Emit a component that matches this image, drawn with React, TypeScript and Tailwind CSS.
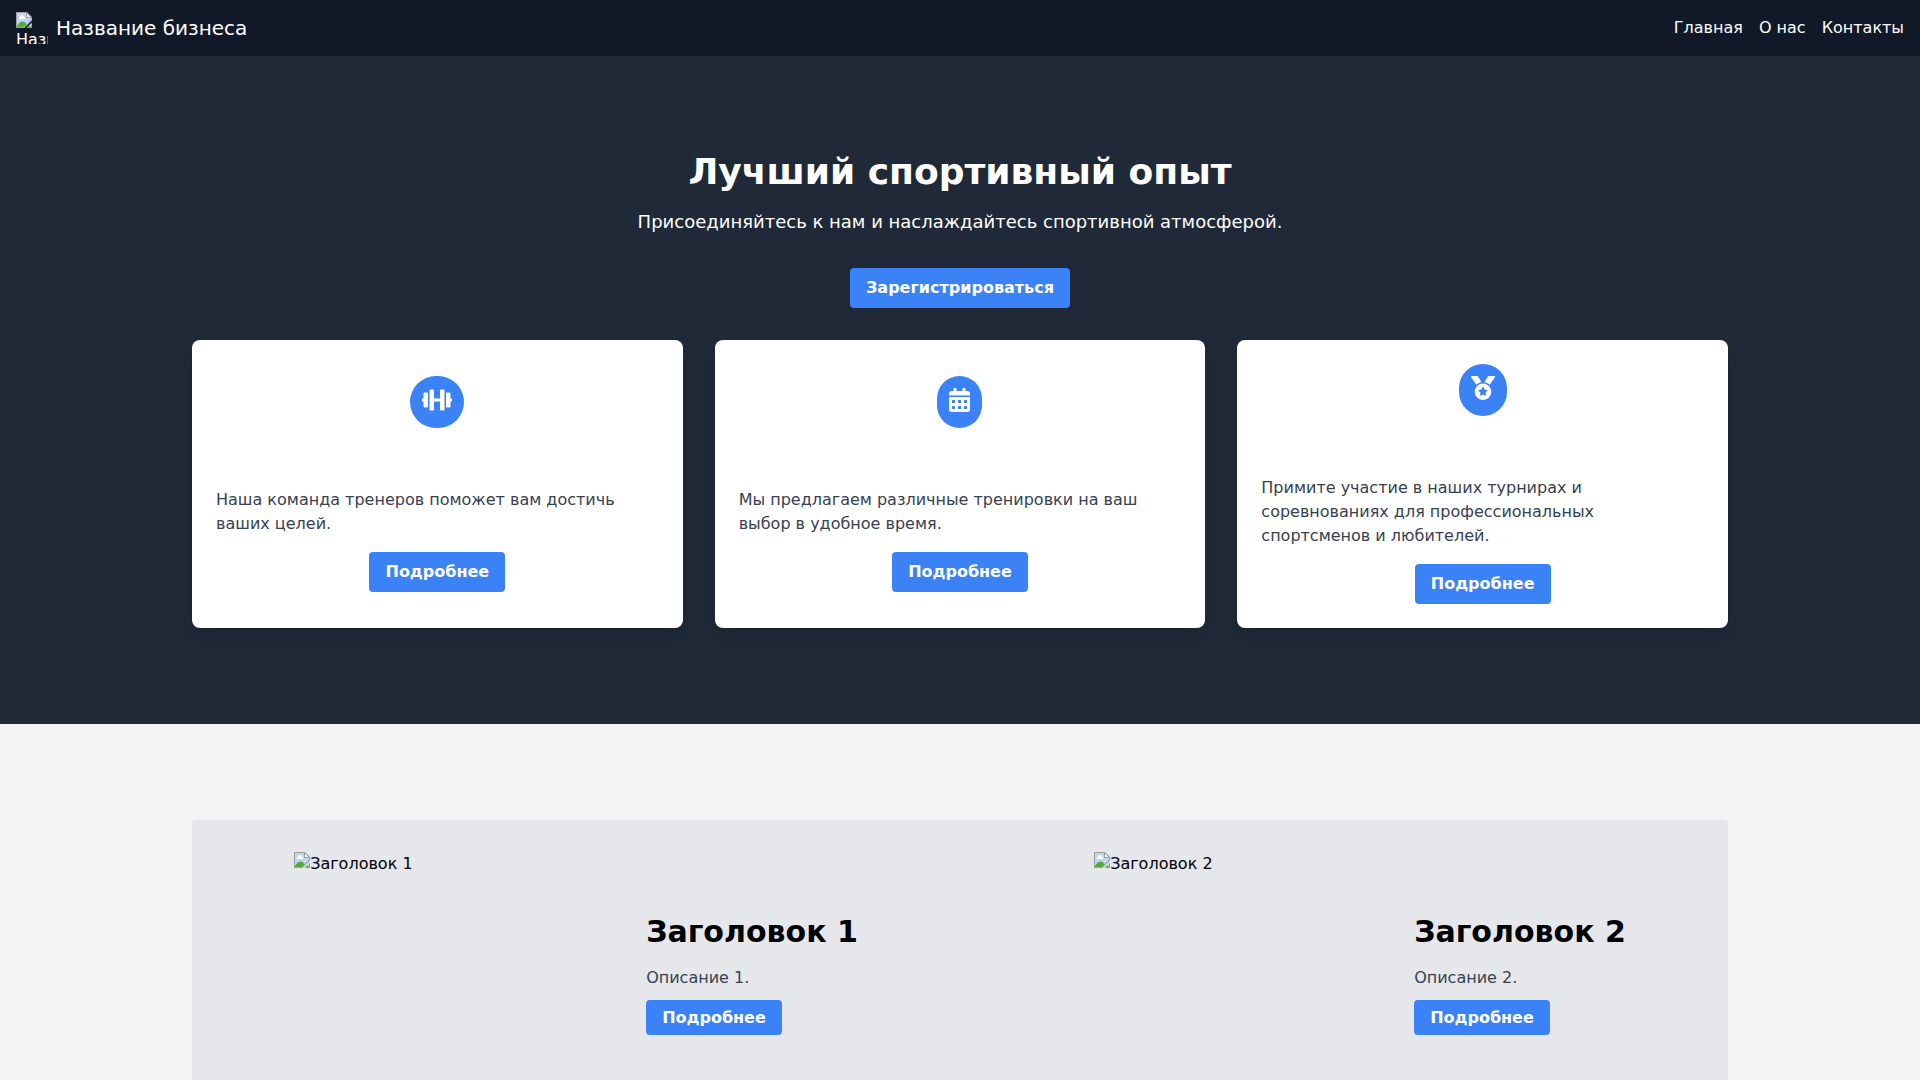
import React, { ReactNode } from 'react';
import { FaCalendarAlt, FaDumbbell, FaMedal } from 'react-icons/fa';

const navLinks = ['Главная', 'О нас', 'Контакты'];

const features = [
  { icon: <FaDumbbell className="h-6 w-[30px]" />, text: 'Наша команда тренеров поможет вам достичь ваших целей.' },
  { icon: <FaCalendarAlt className="h-6 w-[21px]" />, text: 'Мы предлагаем различные тренировки на ваш выбор в удобное время.' },
  {
    icon: <FaMedal className="h-6 w-6" />,
    text: 'Примите участие в наших турнирах и соревнованиях для профессиональных спортсменов и любителей.',
  },
];

function MissingImage() {
  return (
    <svg viewBox="0 0 16 16" className="block h-4 w-4 shrink-0" aria-hidden="true">
      {/* page with a folded corner, torn along the diagonal */}
      <path d="M0 0H11L16 5V8.500L8.500 16H0Z" fill="#9e9e9e" />
      <path d="M1 1H10V6H15V8L8 15H1Z" fill="#c2d5fb" />
      <path d="M11 1.500L14.500 5H11Z" fill="#fff" />
      <path d="M3 7V5H4V4H5V3H7V4H8V5H9V7Z" fill="#fff" />
      <path d="M1 15V14C2.500 11.500 4.500 9.500 6.500 9.500C8.300 9.500 9.600 10.500 10.600 12.400L8 15Z" fill="#56ab35" />
      <path d="M16 10.500V16H10.500Z" fill="#9e9e9e" />
      <path d="M15 11.500V15H11.500Z" fill="#c2d5fb" />
      <path d="M13 13.500L15 14.500V15H11.500Z" fill="#56ab35" />
    </svg>
  );
}

interface FeatureCardProps {
  icon: ReactNode;
  text: string;
}

function FeatureCard({ icon, text }: FeatureCardProps) {
  return (
    <div className="bg-white rounded-lg shadow-lg p-6 flex flex-col items-center justify-center">
      <div className="bg-[#3b82f6] text-white rounded-full px-3 pt-3 pb-4 mb-15">{icon}</div>
      <p className="w-full text-[#374151] mb-4">{text}</p>
      <button className="bg-[#3b82f6] text-white font-bold py-2 px-4 rounded">Подробнее</button>
    </div>
  );
}

interface SlideProps {
  title: string;
  description: string;
  spaced?: boolean;
}

function Slide({ title, description, spaced }: SlideProps) {
  return (
    <article className={spaced ? 'flex items-center mr-8' : 'flex items-center'}>
      <div className={spaced ? 'flex h-60 w-80 mr-8' : 'flex h-60 w-80'}>
        <MissingImage />
        <span>{title}</span>
      </div>
      <div>
        <h2 className="text-3xl font-bold mb-4">{title}</h2>
        <p className="text-[#374151] mb-4">{description}</p>
        <a href="#" className="bg-[#3b82f6] text-white font-bold py-2 px-4 rounded">
          Подробнее
        </a>
      </div>
    </article>
  );
}

export default function App() {
  return (
    <div className="min-h-screen bg-[#f3f4f6] text-black font-['DejaVu_Sans',sans-serif]">
      <nav className="bg-[#111827] text-white px-4 py-3 flex items-center justify-between">
        <a href="#" className="flex items-center">
          <div className="h-8 w-8 mr-2 overflow-hidden">
            <MissingImage />
            <span className="block">Название</span>
          </div>
          <span className="text-xl">Название бизнеса</span>
        </a>
        <ul className="flex gap-4">
          {navLinks.map((link) => (
            <li key={link}>
              <a href="#">{link}</a>
            </li>
          ))}
        </ul>
      </nav>

      <section className="bg-[#1f2937] py-24">
        <div className="container mx-auto">
          <div className="text-center text-white mb-8">
            <h1 className="text-4xl font-bold mb-4">Лучший спортивный опыт</h1>
            <p className="text-lg/7 mb-8">Присоединяйтесь к нам и наслаждайтесь спортивной атмосферой.</p>
            <button className="bg-[#3b82f6] font-bold py-2 px-4 rounded">Зарегистрироваться</button>
          </div>
          <div className="grid grid-cols-3 gap-8">
            {features.map((feature) => (
              <FeatureCard key={feature.text} icon={feature.icon} text={feature.text} />
            ))}
          </div>
        </div>
      </section>

      <section className="py-24">
        <div className="container mx-auto bg-[#e5e7eb] rounded-sm py-8 flex justify-around">
          <Slide title="Заголовок 1" description="Описание 1." spaced />
          <Slide title="Заголовок 2" description="Описание 2." />
        </div>
      </section>
    </div>
  );
}
